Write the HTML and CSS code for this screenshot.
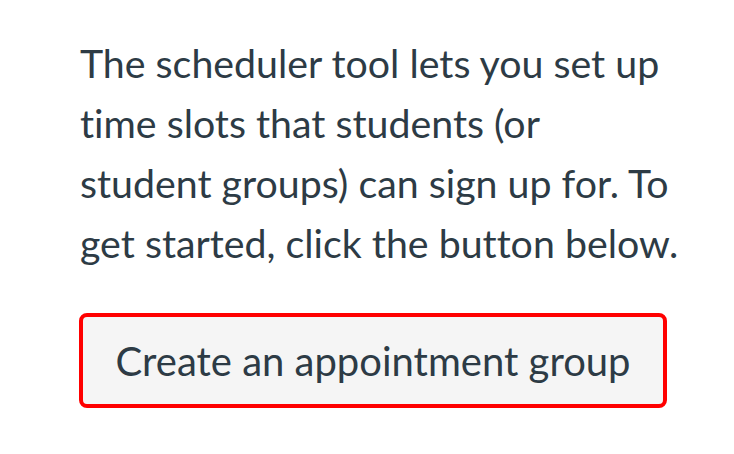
FILE: index.html
```html
<!DOCTYPE html>
<html>
<head>
<meta charset="utf-8">
<link rel="stylesheet" href="styles.css">
</head>
<body>
<div class="panel">
  <p class="intro">The scheduler tool lets you set up time slots that students (or student groups) can sign up for. To get started, click the button below.</p>
  <div class="actions">
    <button class="btn">Create an appointment group</button>
  </div>
</div>
</body>
</html>
```
FILE: styles.css
```css
html, body {
  margin: 0;
  padding: 0;
  background: #ffffff;
}
.panel {
  width: 599px;
  padding: 33px 0 0 80px;
  font-family: Lato, "Open Sans", sans-serif;
  color: #2d3b45;
  font-variant-ligatures: none;
}
.intro {
  margin: 0;
  font-size: 39.3px;
  line-height: 60px;
}
.actions {
  margin-top: 40px;
  display: flex;
}
.btn {
  box-sizing: border-box;
  width: 588px;
  height: 95px;
  margin-left: -1px;
  border: 4px solid #ff0000;
  border-radius: 8px;
  background: #f5f5f5;
  color: #2d3b45;
  font-family: Lato, "Open Sans", sans-serif;
  font-variant-ligatures: none;
  font-size: 40px;
  padding: 0;
}
```
